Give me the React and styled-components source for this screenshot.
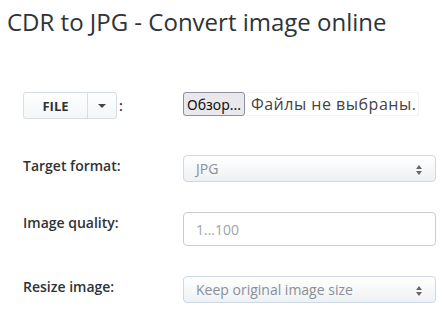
import React from 'react';
import styled, { createGlobalStyle } from 'styled-components';

const GlobalStyle = createGlobalStyle`
    body {
        margin: 0;
        background: #fff;
        font-family: "Open Sans", "Liberation Sans", sans-serif;
        color: #333;
    }
`;

function App() {
    return (
        <Page>
            <GlobalStyle />
            <Title>CDR to JPG - Convert image online</Title>
            <Form>
                <Row top={54}>
                    <Label>
                        <SplitButton>
                            <Main>FILE</Main>
                            <Caret><span /></Caret>
                        </SplitButton>
                        <Colon>:</Colon>
                    </Label>
                    <FileBox>
                        <Browse>Обзор...</Browse>
                        <FileName>Файлы не выбраны.</FileName>
                    </FileBox>
                </Row>
                <Row top={36}>
                    <Label><Text>Target format:</Text></Label>
                    <Select>
                        JPG
                        <Arrows><i className="up" /><i className="down" /></Arrows>
                    </Select>
                </Row>
                <Row top={30}>
                    <Label><Text>Image quality:</Text></Label>
                    <Input placeholder="1...100" />
                </Row>
                <Row top={30}>
                    <Label><Text>Resize image:</Text></Label>
                    <Select>
                        Keep original image size
                        <Arrows><i className="up" /><i className="down" /></Arrows>
                    </Select>
                </Row>
            </Form>
        </Page>
    );
}

const Page = styled.div`
    width: 446px;
    height: 314px;
    overflow: hidden;
`;

const Title = styled.h1`
    margin: 0;
    padding: 5px 0 0 7px;
    font-size: 24px;
    font-weight: 400;
    line-height: 33px;
    color: #2e3338;
`;

const Form = styled.div`
    padding: 0 10px 0 23px;
    display: flex;
    flex-direction: column;
`;

const Row = styled.div`
    display: flex;
    align-items: flex-start;
    margin-top: ${p => p.top}px;
`;

const Label = styled.div`
    width: 160px;
    flex: none;
    display: flex;
    align-items: center;
`;

const Text = styled.span`
    font-size: 14px;
    font-weight: 600;
    line-height: 20px;
    color: #2e3338;
    padding-top: 1px;
`;

const SplitButton = styled.div`
    display: flex;
    height: 27px;
    border: 1px solid #d6dde3;
    border-radius: 3px;
    background: linear-gradient(#fff, #f3f5f7);
    box-sizing: border-box;
`;

const Main = styled.div`
    width: 63px;
    display: flex;
    align-items: center;
    justify-content: center;
    font-size: 13px;
    font-weight: 700;
    color: #2e3338;
    border-right: 1px solid #d6dde3;
`;

const Caret = styled.div`
    width: 28px;
    display: flex;
    align-items: center;
    justify-content: center;

    span {
        width: 0;
        height: 0;
        border-left: 4px solid transparent;
        border-right: 4px solid transparent;
        border-top: 4px solid #444;
    }
`;

const Colon = styled.span`
    margin-left: 2px;
    font-size: 14px;
    font-weight: 600;
`;

const FileBox = styled.div`
    width: 236px;
    height: 24px;
    display: flex;
    align-items: center;
    border: 1px solid #f4f4f4;
    box-sizing: border-box;
`;

const Browse = styled.div`
    height: 24px;
    box-sizing: border-box;
    padding: 0 3px;
    display: flex;
    align-items: center;
    background: #e9e9ed;
    border: 1px solid #8f8f9d;
    border-radius: 3px;
    font-family: "Noto Sans", "DejaVu Sans", sans-serif;
    font-size: 14px;
    color: #111;
    margin-left: -1px;
`;

const FileName = styled.span`
    margin-left: 6px;
    font-size: 16px;
    letter-spacing: 0.5px;
    color: #444;
`;

const Select = styled.div`
    position: relative;
    width: 253px;
    height: 27px;
    box-sizing: border-box;
    border: 1px solid #cdd8e2;
    border-radius: 4px;
    background: linear-gradient(#fff, #eef1f4);
    padding-left: 12px;
    display: flex;
    align-items: center;
    font-size: 14px;
    color: #8a8f96;
`;

const Arrows = styled.div`
    position: absolute;
    right: 13px;
    top: 9px;
    display: flex;
    flex-direction: column;
    gap: 2px;

    i {
        width: 0;
        height: 0;
        border-left: 3px solid transparent;
        border-right: 3px solid transparent;
    }
    .up { border-bottom: 4px solid #666; }
    .down { border-top: 4px solid #666; }
`;

const Input = styled.input`
    width: 253px;
    height: 34px;
    box-sizing: border-box;
    border: 1px solid #ccc;
    border-radius: 4px;
    padding: 0 12px;
    font-family: "Open Sans", sans-serif;
    font-size: 14px;
    outline: none;

    &::placeholder {
        color: #a0a4a8;
    }
`;

export default App;
